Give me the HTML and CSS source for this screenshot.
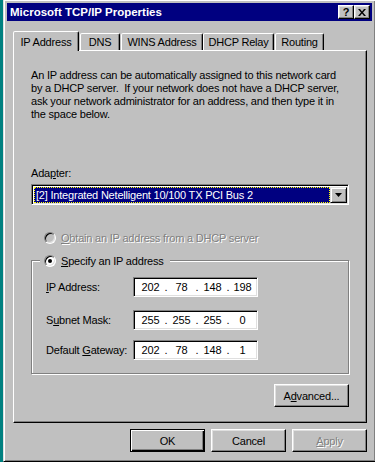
FILE: index.html
```html
<!DOCTYPE html>
<html lang="en">
  <head>
    <meta charset="UTF-8" />
    <title>Microsoft TCP/IP Properties</title>
    <link rel="stylesheet" href="styles.css">
  </head>
  <body>
    <div class="window">
      <!-- caption -->
      <div class="titlebar">
        <span class="title">Microsoft TCP/IP Properties</span>
        <div class="caption-btns">
          <span class="cbtn help">?</span>
          <span class="cbtn">
            <svg width="8" height="7" viewBox="0 0 8 7">
              <path d="M0 0h2l2 2.5L6 0h2L5 3.5 8 7H6L4 4.5 2 7H0l3-3.5z" fill="#000"/>
            </svg>
          </span>
        </div>
      </div>

      <div class="dialog">
        <!-- tabs -->
        <div class="tabs">
          <div class="tab active t-ip">IP Address</div>
          <div class="tab t-dns">DNS</div>
          <div class="tab t-wins">WINS Address</div>
          <div class="tab t-relay">DHCP Relay</div>
          <div class="tab t-route">Routing</div>
        </div>

        <div class="panel">
          <p class="intro">An IP address can be automatically assigned to this network card by a DHCP server.&nbsp; If your network does not have a DHCP server, ask your network administrator for an address, and then type it in the space below.</p>

          <div class="label">Ada<u>p</u>ter:</div>
          <div class="combo">
            <div class="combo-value"><span>[2] Integrated Netelligent 10/100 TX PCI Bus 2</span></div>
            <div class="combo-btn">
              <svg width="7" height="4" viewBox="0 0 7 4"><path d="M0 0h7L3.5 4z" fill="#000"/></svg>
            </div>
          </div>

          <div class="radio-row disabled">
            <span class="radio"></span>
            <span class="radio-text"><u>O</u>btain an IP address from a DHCP server</span>
          </div>

          <fieldset class="group">
            <legend class="legend">
              <span class="radio checked"></span>
              <span><u>S</u>pecify an IP address</span>
            </legend>

            <div class="field-row row-ip">
              <span class="field-label"><u>I</u>P Address:</span>
              <div class="ipbox">
                <span class="oct">202</span><span class="dot">.</span><span class="oct">78</span><span class="dot">.</span><span class="oct">148</span><span class="dot">.</span><span class="oct last">198</span>
              </div>
            </div>
            <div class="field-row row-mask">
              <span class="field-label">S<u>u</u>bnet Mask:</span>
              <div class="ipbox">
                <span class="oct">255</span><span class="dot">.</span><span class="oct">255</span><span class="dot">.</span><span class="oct">255</span><span class="dot">.</span><span class="oct last">0</span>
              </div>
            </div>
            <div class="field-row row-gw">
              <span class="field-label">Default <u>G</u>ateway:</span>
              <div class="ipbox">
                <span class="oct">202</span><span class="dot">.</span><span class="oct">78</span><span class="dot">.</span><span class="oct">148</span><span class="dot">.</span><span class="oct last">1</span>
              </div>
            </div>
          </fieldset>

          <div class="adv-row">
            <button class="btn">A<u>d</u>vanced...</button>
          </div>
        </div>

        <!-- dialog buttons -->
        <div class="actions">
          <button class="btn default">OK</button>
          <button class="btn">Cancel</button>
          <button class="btn" disabled><u>A</u>pply</button>
        </div>
      </div>
    </div>
  </body>
</html>
```

FILE: styles.css
```css
body {
  margin: 0;
  height: 462px;
  overflow: hidden;
  background: #008080;
  font-family: "Liberation Sans", Arial, sans-serif;
  font-size: 11px;
  letter-spacing: -0.2px;
  color: #000;
}
u {
  text-underline-offset: 1px;
}

.window {
  margin: -1px 0 0 3px;
  width: 373px;
  height: 463px;
  box-sizing: border-box;
  padding: 3px;
  background: #c0c0c0;
  border: 1px solid;
  border-color: #dfdfdf #000 #000 #dfdfdf;
  box-shadow: inset 1px 1px #fff, inset -1px -1px #808080;
}

/* caption bar */
.titlebar {
  height: 18px;
  display: flex;
  align-items: center;
  justify-content: space-between;
  padding: 0 2px 0 3px;
  background: #000080;
  color: #fff;
  font-weight: bold;
  font-size: 11.5px;
  letter-spacing: 0;
}
.caption-btns {
  display: flex;
}
.cbtn {
  width: 16px;
  height: 14px;
  box-sizing: border-box;
  display: flex;
  align-items: center;
  justify-content: center;
  background: #c0c0c0;
  color: #000;
  border: 1px solid;
  border-color: #fff #000 #000 #fff;
  box-shadow: inset -1px -1px #808080, inset 1px 1px #dfdfdf;
}
.cbtn.help {
  font-size: 11px;
  font-weight: bold;
}

.dialog {
  padding: 10px 5px 0 6px;
}

/* tabs */
.tabs {
  display: flex;
  align-items: flex-end;
  height: 19px;
}
.tab {
  height: 17px;
  box-sizing: border-box;
  display: flex;
  align-items: center;
  justify-content: center;
  border: 1px solid;
  border-bottom: none;
  border-color: #fff #000 transparent #fff;
  border-radius: 2px 2px 0 0;
  box-shadow: inset -1px 0 #808080;
  background: #c0c0c0;
}
.tab.active {
  position: relative;
  z-index: 1;
  height: 20px;
  margin-bottom: -1px;
}
.t-ip { width: 66px; }
.t-dns { width: 40px; margin-left: 1px; }
.t-wins { width: 82px; margin-left: 1px; }
.t-relay { width: 71px; }
.t-route { width: 49px; margin-left: 1px; }

.panel {
  height: 373px;
  box-sizing: border-box;
  padding: 0 17px 0 17px;
  border: 1px solid;
  border-color: #fff #000 #000 #fff;
  box-shadow: inset -1px -1px #808080;
}
.intro {
  margin: 18px 0 0;
  line-height: 13px;
}
.label {
  margin-top: 46px;
  line-height: 13px;
}

/* adapter combo */
.combo {
  margin-top: 4px;
  height: 21px;
  box-sizing: border-box;
  display: flex;
  padding: 1px;
  background: #fff;
  border: 1px solid;
  border-color: #808080 #fff #fff #808080;
  box-shadow: inset 1px 1px #000, inset -1px -1px #dfdfdf;
}
.combo-value {
  flex: 1;
  margin: 1px 0 0 1px;
  background: #000080;
  color: #fff;
  outline: 1px dotted #ffff00;
  outline-offset: -1px;
  display: flex;
  align-items: center;
  padding-left: 2px;
}
.combo-btn {
  width: 17px;
  margin-top: 1px;
  box-sizing: border-box;
  display: flex;
  align-items: center;
  justify-content: center;
  background: #c0c0c0;
  border: 1px solid;
  border-color: #dfdfdf #000 #000 #dfdfdf;
  box-shadow: inset 1px 1px #fff, inset -1px -1px #808080;
}

/* radios */
.radio {
  width: 12px;
  height: 12px;
  box-sizing: border-box;
  flex: none;
  display: flex;
  align-items: center;
  justify-content: center;
  border-radius: 50%;
  background: #fff;
  border: 1px solid;
  border-color: #808080 #fff #fff #808080;
  box-shadow: inset 1px 1px #000, inset -1px -1px #dfdfdf;
}
.radio.checked::after {
  content: "";
  width: 4px;
  height: 4px;
  border-radius: 50%;
  background: #000;
}
.radio-row {
  margin: 26px 0 0 13px;
  height: 13px;
  display: flex;
  align-items: center;
  gap: 5px;
}
.disabled .radio {
  background: #c0c0c0;
}
.disabled .radio-text {
  color: #808080;
  text-shadow: 1px 1px #fff;
}

/* group box */
.group {
  margin: 10px 0 0;
  padding: 0 0 13px 14px;
  border: 1px solid #808080;
  box-shadow: inset 1px 1px #fff, 1px 1px #fff;
}
.legend {
  margin-left: -6px;
  padding: 0 6px 0 4px;
  height: 13px;
  display: flex;
  align-items: center;
  gap: 5px;
  background: #c0c0c0;
}
.field-row {
  display: flex;
  align-items: center;
  height: 20px;
}
.row-ip { margin-top: 10px; }
.row-mask { margin-top: 13px; }
.row-gw { margin-top: 10px; }
.field-label {
  width: 87px;
}
.ipbox {
  width: 125px;
  height: 20px;
  box-sizing: border-box;
  display: flex;
  align-items: center;
  padding-left: 4px;
  overflow: hidden;
  background: #fff;
  border: 1px solid;
  border-color: #808080 #fff #fff #808080;
  box-shadow: inset 1px 1px #000, inset -1px -1px #dfdfdf;
}
.oct {
  width: 25px;
  text-align: center;
}
.oct.last {
  width: 23px;
}
.dot {
  width: 6px;
  text-align: center;
}

/* push buttons */
.btn {
  width: 75px;
  height: 23px;
  box-sizing: border-box;
  padding: 0;
  font: inherit;
  letter-spacing: inherit;
  color: #000;
  background: #c0c0c0;
  border: 1px solid;
  border-color: #fff #000 #000 #fff;
  box-shadow: inset -1px -1px #808080, inset 1px 1px #dfdfdf;
}
.btn.default {
  border-color: #000;
  box-shadow: inset 1px 1px #fff, inset -1px -1px #000, inset -2px -2px #808080;
}
.btn:disabled {
  color: #808080;
  text-shadow: 1px 1px #fff;
}
.adv-row {
  margin-top: 10px;
  display: flex;
  justify-content: flex-end;
}
.actions {
  margin-top: 6px;
  display: flex;
  justify-content: flex-end;
  gap: 6px;
}
```
